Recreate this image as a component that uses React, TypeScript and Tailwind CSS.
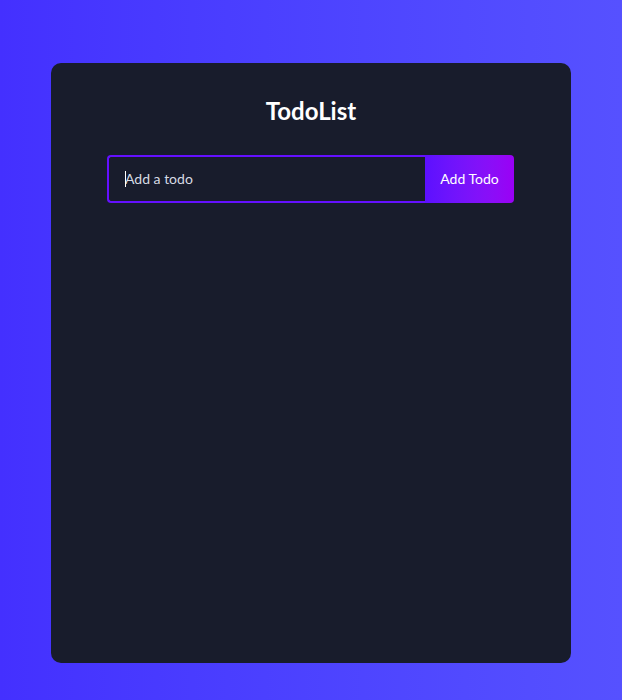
export default function App() {
  return (
    <div
      className="w-full min-h-[700px] flex justify-center items-start bg-gradient-to-r from-[#4430ff] to-[#5651ff] pt-[63px]"
      style={{ fontFamily: 'Lato, "Noto Sans", sans-serif' }}
    >
      <div className="w-[520px] h-[600px] bg-[#181c2c] rounded-[10px] pt-8 flex flex-col">
        <h1 className="text-2xl leading-8 font-bold text-white text-center">TodoList</h1>
        <div className="mt-7 ml-[56px] w-[407px] h-12 flex">
          <div className="relative flex-1 min-w-0 flex border-2 border-r-0 border-[#6410ff] rounded-l-[4px]">
            <input
              className="flex-1 min-w-0 bg-transparent pl-4 text-sm text-[#d6dbe4] placeholder:text-[#d6dbe4] outline-none caret-white"
              placeholder="Add a todo"
            />
            <span className="absolute left-4 top-[14px] w-px h-4 bg-white" />
          </div>
          <button className="w-[89px] h-full rounded-r-[4px] bg-gradient-to-r from-[#5c10ff] to-[#9a00f5] text-white text-sm">
            Add Todo
          </button>
        </div>
      </div>
    </div>
  );
}
